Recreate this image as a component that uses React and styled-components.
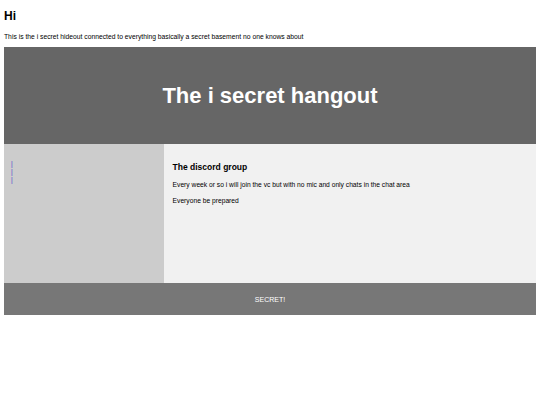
import React from "react";
import styled, { createGlobalStyle } from "styled-components";

const Global = createGlobalStyle`
  html, body { margin: 0; padding: 0; background: #fff; }
  body { font-family: "Liberation Sans", Arial, sans-serif; }
  * { box-sizing: border-box; }
`;

const Page = styled.div`
  padding: 0 4px 0 4px;
`;

const Title = styled.h2`
  font-size: 12px;
  font-weight: bold;
  margin: 0;
  padding-top: 10px;
  line-height: 13px;
  color: #000;
`;

const Intro = styled.p`
  font-size: 6.75px;
  margin: 10px 0 0 0;
  line-height: 8px;
  color: #000;
`;

const Header = styled.header`
  margin-top: 6px;
  background: #666;
  height: 97px;
  display: flex;
  align-items: center;
  justify-content: center;
  color: #fff;
  font-size: 22px;
  font-weight: bold;
`;

const Section = styled.section`
  display: flex;
  height: 139px;
`;

const Nav = styled.nav`
  width: 30%;
  background: #ccc;
  padding: 16px 7px;
`;

const LinkList = styled.ul`
  list-style: none;
  margin: 0;
  padding: 0;
`;

const Item = styled.li`
  font-size: 6.5px;
  line-height: 8px;
`;

const Link = styled.a`
  color: #4444cc;
  text-decoration: none;
`;

const Article = styled.article`
  width: 70%;
  background: #f1f1f1;
  padding: 18px 9px 16px 9px;
`;

const ArticleTitle = styled.h3`
  font-size: 8.5px;
  font-weight: bold;
  margin: 0 0 9px 0;
  line-height: 10px;
`;

const Text = styled.p`
  font-size: 6.7px;
  line-height: 8px;
  margin: 0 0 8px 0;
`;

const Footer = styled.footer`
  background: #777;
  height: 32px;
  display: flex;
  align-items: center;
  justify-content: center;
  color: #fff;
  font-size: 7px;
`;

export default function App() {
  return (
    <>
      <Global />
      <Page>
        <Title>Hi</Title>
        <Intro>This is the i secret hideout connected to everything basically a secret basement no one knows about</Intro>
        <Header>The i secret hangout</Header>
        <Section>
          <Nav>
            <LinkList>
              <Item><Link href="#">|</Link></Item>
              <Item><Link href="#">|</Link></Item>
              <Item><Link href="#">|</Link></Item>
            </LinkList>
          </Nav>
          <Article>
            <ArticleTitle>The discord group</ArticleTitle>
            <Text>Every week or so i will join the vc but with no mic and only chats in the chat area</Text>
            <Text>Everyone be prepared</Text>
          </Article>
        </Section>
        <Footer>SECRET!</Footer>
      </Page>
    </>
  );
}
